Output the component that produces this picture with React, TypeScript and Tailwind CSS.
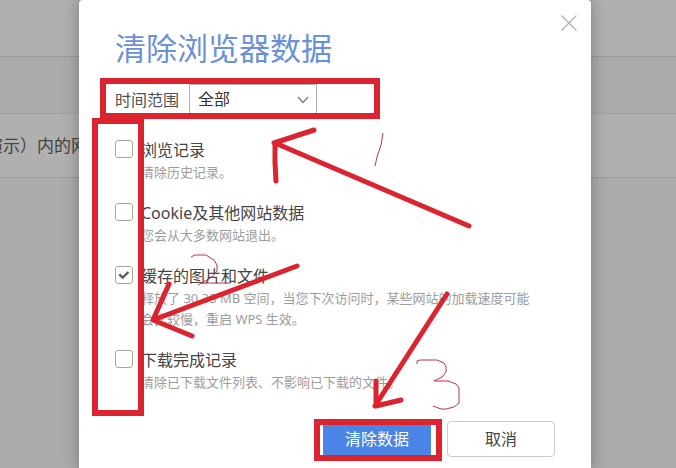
import { useState } from 'react';

interface DataOption {
    id: string;
    title: string;
    description: string;
}

const options: DataOption[] = [
    { id: 'history', title: '浏览记录', description: '清除历史记录。' },
    { id: 'cookies', title: 'Cookie及其他网站数据', description: '您会从大多数网站退出。' },
    {
        id: 'cache',
        title: '缓存的图片和文件',
        description: '释放了 30.33 MB 空间，当您下次访问时，某些网站的加载速度可能会比较慢，重启 WPS 生效。',
    },
    { id: 'downloads', title: '下载完成记录', description: '清除已下载文件列表、不影响已下载的文件。' },
];

function Annotations() {
    return (
        <svg
            viewBox="79 0 512 468"
            className="pointer-events-none absolute top-0 left-0 h-[468px] w-[512px]"
            fill="none"
            stroke="#dc2430"
            aria-hidden="true"
        >
            {/* Boxes */}
            <g strokeWidth="6">
                <rect x="103" y="81" width="274" height="35" />
                <rect x="95" y="121" width="46" height="292" />
                <rect x="317" y="422" width="122" height="36" />
            </g>
            {/* Arrows */}
            <g strokeWidth="5" strokeLinecap="round" strokeLinejoin="round">
                <path d="M469 226 275 143M314 130 274 143M275 143V162L276 181" />
                <path d="M297 266 153 320M169 284 153 320 192 336" />
                <path d="M447 294 375 406M376 381V406L401 400" />
            </g>
            {/* Step numbers */}
            <g stroke="#b8354e" strokeWidth="1">
                <path d="M383 133 381 145 377 157 375 166" />
                <path d="M191 257 195 255H206L214 260 217 265V271L212 277 198 285M200 283H230" />
                <path d="M417 364V361L420 360H437L444 363 446 367V372L442 377 434 381H448L456 384 459 388V403L454 407 446 409H441L433 406" />
            </g>
        </svg>
    );
}

function OptionRow({ option, checked, onToggle }: { option: DataOption; checked: boolean; onToggle: () => void }) {
    return (
        <label htmlFor={option.id} className="flex items-start gap-2">
            <span className="mt-0.5 grid size-[18px] shrink-0 place-items-center">
                <input
                    id={option.id}
                    type="checkbox"
                    checked={checked}
                    onChange={onToggle}
                    className="col-start-1 row-start-1 size-[18px] appearance-none rounded-[3px] border border-[#a6a6a6] bg-white"
                />
                {checked && (
                    <svg
                        width="18"
                        height="18"
                        viewBox="0 0 18 18"
                        fill="none"
                        stroke="#5c5c5c"
                        strokeWidth="2.4"
                        className="pointer-events-none col-start-1 row-start-1"
                    >
                        <path d="M4.3 8.3 7.7 11.6 13.4 6" />
                    </svg>
                )}
            </span>
            <span className="min-w-0 flex-1 pr-4">
                <span className="block text-base leading-6 text-[#444444]">{option.title}</span>
                <span className="block text-[13px] leading-[21px] text-[#9c9c9c]">{option.description}</span>
            </span>
        </label>
    );
}

export default function App() {
    const [selected, setSelected] = useState<string[]>(['cache']);

    const toggle = (id: string) => {
        setSelected((current) => (current.includes(id) ? current.filter((item) => item !== id) : [...current, id]));
    };

    return (
        <div className="relative min-h-screen overflow-hidden bg-[#ababab] font-['Noto_Sans','Noto_Sans_CJK_SC',sans-serif]">
            {/* Settings page behind the dialog */}
            <div className="absolute inset-0">
                <div className="h-[57px] border-b border-[#999999] bg-[#b0b0b0]" />
                <div className="h-[57px] border-b border-[#a0a0a0]" />
                <div className="flex h-16 items-center border-b border-[#9c9c9c] bg-[#b0b0b0]">
                    <p className="-ml-3.5 text-[17px] whitespace-nowrap text-[#444444]">演示）内的网</p>
                </div>
            </div>

            <div className="relative flex min-h-screen justify-center pr-1.5">
                <div
                    role="dialog"
                    aria-labelledby="dialog-title"
                    className="relative w-[512px] rounded-t-sm bg-white px-9 pt-[30px] pb-3 shadow-[0_0_16px_rgba(0,0,0,0.3)]"
                >
                    <button type="button" aria-label="关闭" className="absolute top-[15px] right-3.5 text-[#b0b0b0]">
                        <svg width="16" height="16" viewBox="0 0 16 16" fill="none" stroke="currentColor" strokeWidth="1.3">
                            <path d="M0.5 0.5 15.5 15.5M15.5 0.5 0.5 15.5" />
                        </svg>
                    </button>

                    <h1 id="dialog-title" className="text-[31px] leading-9 font-normal text-[#6a90d8]">
                        清除浏览器数据
                    </h1>

                    <div className="mt-[18px] flex items-center gap-2.5">
                        <label htmlFor="range" className="pt-0.5 text-base leading-6 text-[#505050]">
                            时间范围
                        </label>
                        <div className="relative">
                            <select
                                id="range"
                                defaultValue="all"
                                className="block h-[30px] w-32 appearance-none border border-[#b0b0b0] bg-white pl-2 text-base leading-6 text-[#333333]"
                            >
                                <option value="all">全部</option>
                            </select>
                            <svg
                                width="12"
                                height="8"
                                viewBox="0 0 12 8"
                                fill="none"
                                stroke="#777777"
                                strokeWidth="1.3"
                                className="pointer-events-none absolute top-3 right-2"
                            >
                                <path d="M1 1 6 6.5 11 1" />
                            </svg>
                        </div>
                    </div>

                    <div className="mt-6 flex flex-col gap-[18px]">
                        {options.map((option) => (
                            <OptionRow
                                key={option.id}
                                option={option}
                                checked={selected.includes(option.id)}
                                onToggle={() => toggle(option.id)}
                            />
                        ))}
                    </div>

                    <div className="mt-7 flex justify-end gap-4">
                        <button type="button" className="h-9 w-[108px] rounded-sm bg-[#4a84e4] text-base text-white">
                            清除数据
                        </button>
                        <button type="button" className="h-9 w-[108px] rounded-sm border border-[#cccccc] bg-white text-base text-[#444444]">
                            取消
                        </button>
                    </div>

                    <Annotations />
                </div>
            </div>
        </div>
    );
}
